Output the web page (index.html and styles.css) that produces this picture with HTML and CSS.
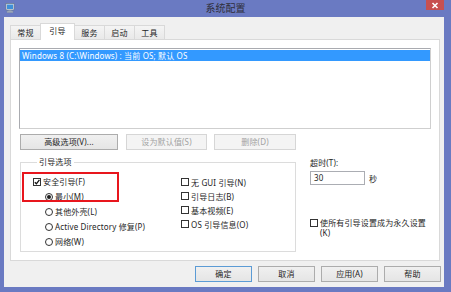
FILE: index.html
```html
<!DOCTYPE html>
<html lang="zh-CN">
<head>
    <meta charset="UTF-8">
    <title>系统配置</title>
    <link rel="stylesheet" href="styles.css">
</head>
<body>
    <div class="window">
        <div class="titlebar">
            <svg class="app-icon" viewBox="0 0 10 10" width="10" height="10">
                <rect x="1" y="0.5" width="8" height="6.5" fill="#e8eef5" stroke="#6d7d92" stroke-width="0.8"/>
                <rect x="2" y="1.5" width="6" height="4.5" fill="#3f8fd8"/>
                <rect x="3.5" y="7" width="3" height="1.2" fill="#8a96a6"/>
                <rect x="2" y="8.2" width="6" height="1.3" fill="#c9d1db" stroke="#7b8899" stroke-width="0.5"/>
            </svg>
            <div class="title">系统配置</div>
            <div class="close">
                <svg viewBox="0 0 8 7" width="8" height="7">
                    <path d="M1.5 1 L6.5 6 M6.5 1 L1.5 6" stroke="#fff" stroke-width="1.6"/>
                </svg>
            </div>
        </div>

        <div class="client">
            <div class="tabs">
                <div class="tab">常规</div>
                <div class="tab active">引导</div>
                <div class="tab">服务</div>
                <div class="tab">启动</div>
                <div class="tab">工具</div>
            </div>

            <div class="panel">
                <div class="os-list">
                    <div class="os-item selected">Windows 8 (C:\Windows) : 当前 OS; 默认 OS</div>
                </div>

                <div class="os-actions">
                    <button class="btn btn-advanced">高级选项(V)...</button>
                    <button class="btn btn-default" disabled>设为默认值(S)</button>
                    <button class="btn btn-delete" disabled>删除(D)</button>
                </div>

                <div class="options">
                    <fieldset class="group">
                        <legend>引导选项</legend>
                        <div class="highlight"></div>
                        <div class="group-cols">
                            <div class="col-left">
                                <div class="opt"><span class="box checked"><svg viewBox="0 0 6 6" width="6" height="6"><path d="M0.8 3.2 L2.4 4.8 L5.4 0.8" fill="none" stroke="#111" stroke-width="1.3"/></svg></span>安全引导(F)</div>
                                <div class="opt indent"><span class="radio on"></span>最小(M)</div>
                                <div class="opt indent"><span class="radio"></span>其他外壳(L)</div>
                                <div class="opt indent"><span class="radio"></span>Active Directory 修复(P)</div>
                                <div class="opt indent"><span class="radio"></span>网络(W)</div>
                            </div>
                            <div class="col-right">
                                <div class="opt"><span class="box"></span>无 GUI 引导(N)</div>
                                <div class="opt"><span class="box"></span>引导日志(B)</div>
                                <div class="opt"><span class="box"></span>基本视频(E)</div>
                                <div class="opt"><span class="box"></span>OS 引导信息(O)</div>
                            </div>
                        </div>
                    </fieldset>

                    <div class="side">
                        <div class="timeout-label">超时(T):</div>
                        <div class="timeout-row">
                            <div class="timeout-input">30</div>
                            <span>秒</span>
                        </div>
                        <div class="permanent">
                            <span class="box"></span>
                            <span class="permanent-text">使所有引导设置成为永久设置(K)</span>
                        </div>
                    </div>
                </div>
            </div>

            <div class="dialog-buttons">
                <button class="btn btn-dialog btn-ok">确定</button>
                <button class="btn btn-dialog">取消</button>
                <button class="btn btn-dialog">应用(A)</button>
                <button class="btn btn-dialog">帮助</button>
            </div>
        </div>
    </div>
</body>
</html>
```

FILE: styles.css
```css
* {
    box-sizing: border-box;
}
body {
    margin: 0;
    width: 451px;
    height: 292px;
    overflow: hidden;
    background: #6a7ac2;
    font-family: "Noto Sans", "Noto Sans CJK SC", sans-serif;
    font-size: 8px;
    letter-spacing: 0.15px;
    color: #1e1e1e;
}
.window {
    display: flex;
    flex-direction: column;
    height: 292px;
}

/* title bar */
.titlebar {
    height: 17px;
    display: grid;
    grid-template-columns: 1fr auto 1fr;
    align-items: start;
}
.app-icon {
    display: block;
    margin: 3px 0 0 5px;
}
.title {
    font-size: 10px;
    line-height: 17px;
    letter-spacing: 0;
    color: #2f2f3a;
}
.close {
    justify-self: end;
    margin-right: 7px;
    width: 18px;
    height: 10px;
    background: #c75050;
    display: flex;
    align-items: center;
    justify-content: center;
}
.close svg {
    display: block;
}

/* client area */
.client {
    flex: 1;
    margin: 0 7px 5px 4px;
    background: #f0f0f0;
    padding: 6px 4px 0 6px;
}
.tabs {
    display: flex;
    align-items: flex-end;
    height: 16px;
    position: relative;
    z-index: 1;
}
.tab {
    width: 31px;
    height: 14px;
    margin-left: -1px;
    border: 1px solid #d9d9d9;
    border-bottom: none;
    background: linear-gradient(#f4f4f4, #e9e9e9);
    text-align: center;
    line-height: 13px;
}
.tab:first-child {
    margin-left: 0;
}
.tab.active {
    width: 35px;
    height: 17px;
    margin-bottom: -1px;
    background: #fff;
    line-height: 14px;
}
.panel {
    height: 222px;
    border: 1px solid #d9d9d9;
    background: #fff;
    padding: 8px 8px 0;
}
.os-list {
    height: 81px;
    border: 1px solid #a9abb0;
    border-right-color: #cfcfcf;
    border-bottom-color: #cfcfcf;
    padding: 1px 0;
}
.os-item {
    height: 11px;
    line-height: 11px;
    padding-left: 2px;
    white-space: nowrap;
}
.os-item.selected {
    background: #3399ff;
    color: #fff;
}

/* buttons */
.btn {
    height: 16px;
    padding: 0;
    border: 1px solid #acacac;
    background: linear-gradient(#f0f0f0, #e5e5e5);
    font: inherit;
    letter-spacing: inherit;
    color: #1e1e1e;
    line-height: 14px;
    text-align: center;
}
.btn:disabled {
    color: #a2a2a2;
    border-color: #d6d6d6;
    background: #f4f4f4;
}
.os-actions {
    display: flex;
    margin-top: 5px;
    padding-left: 1px;
}
.btn-advanced {
    width: 98px;
}
.btn-default {
    width: 81px;
    margin-left: 8px;
}
.btn-delete {
    width: 82px;
    margin-left: 7px;
}

/* boot options */
.options {
    display: flex;
    margin-top: 7px;
    padding-left: 1px;
}
.group {
    position: relative;
    width: 276px;
    height: 95px;
    margin: 0;
    border: 1px solid #dcdcdc;
    padding: 7px 0 0 12px;
}
.group legend {
    margin-left: 4px;
    padding: 0 2px;
    line-height: 10px;
}
.highlight {
    position: absolute;
    left: 1px;
    top: 5px;
    width: 97px;
    height: 30px;
    border: 2px solid #e8161d;
}
.group-cols {
    display: grid;
    grid-template-columns: 148px 1fr;
}
.opt {
    display: flex;
    align-items: center;
    gap: 2px;
    height: 15px;
    white-space: nowrap;
}
.col-right .opt {
    height: 14px;
}
.col-right {
    margin-top: 1px;
}
.indent {
    padding-left: 12px;
}
.box {
    flex: none;
    width: 8px;
    height: 8px;
    border: 1px solid #333;
    background: #fff;
    display: flex;
    align-items: center;
    justify-content: center;
}
.box svg {
    display: block;
}
.radio {
    flex: none;
    width: 8px;
    height: 8px;
    border: 1px solid #333;
    border-radius: 50%;
    background: #fff;
    display: flex;
    align-items: center;
    justify-content: center;
}
.radio.on::after {
    content: "";
    width: 4px;
    height: 4px;
    border-radius: 50%;
    background: #1e1e1e;
}

.side {
    margin-left: 14px;
    display: flex;
    flex-direction: column;
}
.timeout-label {
    line-height: 12px;
}
.timeout-row {
    display: flex;
    align-items: center;
    gap: 4px;
    margin-top: 2px;
}
.timeout-input {
    width: 55px;
    height: 14px;
    border: 1px solid #abadb3;
    padding-left: 3px;
    line-height: 12px;
    background: #fff;
}
.permanent {
    display: flex;
    align-items: flex-start;
    gap: 2px;
    margin-top: 33px;
}
.permanent .box {
    margin-top: 1px;
}
.permanent-text {
    width: 110px;
    line-height: 10px;
}

/* dialog buttons */
.dialog-buttons {
    display: flex;
    justify-content: flex-end;
    gap: 6px;
    margin-top: 5px;
    margin-right: -1px;
}
.btn-dialog {
    width: 57px;
}
.btn-ok {
    border-color: #5b9bd5;
}
```
